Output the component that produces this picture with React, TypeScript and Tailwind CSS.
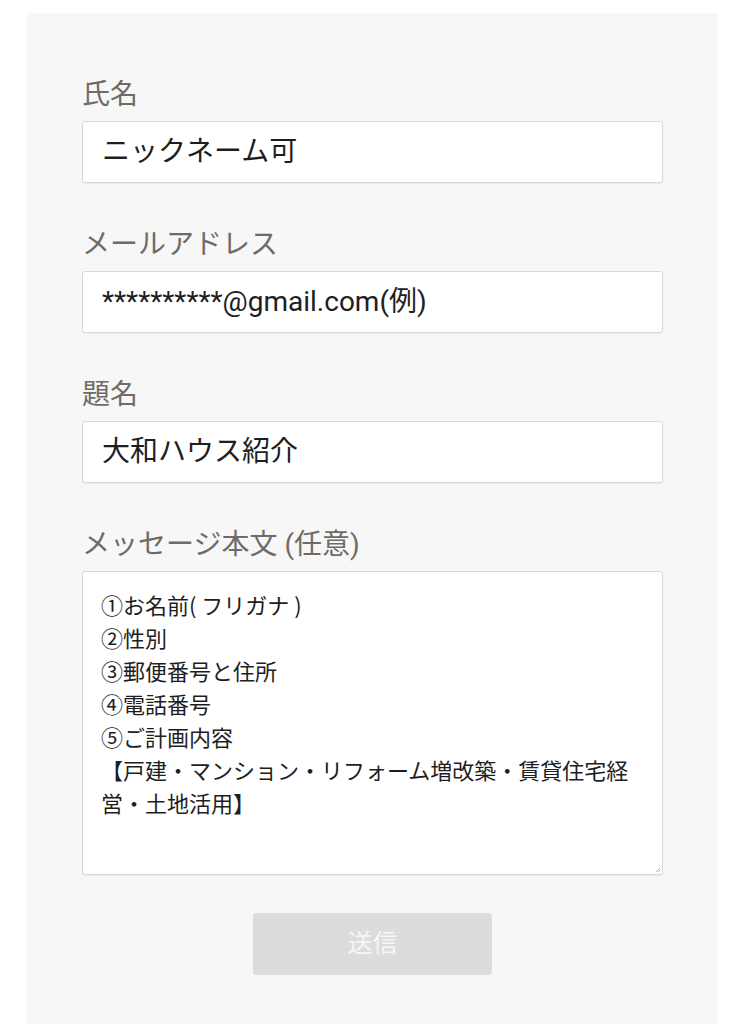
const fields = [
  { label: "氏名", value: "ニックネーム可" },
  { label: "メールアドレス", value: "**********@gmail.com(例)" },
  { label: "題名", value: "大和ハウス紹介" },
];

const messageLines = [
  "①お名前( フリガナ )",
  "②性別",
  "③郵便番号と住所",
  "④電話番号",
  "⑤ご計画内容",
  "【戸建・マンション・リフォーム増改築・賃貸住宅経",
  "営・土地活用】",
];

const App = () => {
  return (
    <div className="min-h-[1024px] bg-white pt-[13px] font-['Roboto','Noto_Sans_CJK_JP',sans-serif]">
      <div className="mx-[27px] w-[691px] min-h-[1011px] bg-[#f7f7f7] px-[55px] pt-[64px]">
        <form className="flex flex-col">
          {fields.map((field) => (
            <div key={field.label} className="mb-[44px] flex flex-col">
              <label className="h-[36px] text-[28px] leading-[36px] text-[#6f6b66]">{field.label}</label>
              <div className="mt-[8px] flex h-[62px] items-center rounded-[3px] border border-[#d8d8d8] bg-white px-[19px] text-[28px] text-[#1e1e1e] shadow-[0_1px_1px_rgba(0,0,0,0.05)]">
                {field.value}
              </div>
            </div>
          ))}

          <div className="flex flex-col">
            <label className="h-[36px] text-[28px] leading-[36px] text-[#6f6b66]">メッセージ本文 (任意)</label>
            <div className="relative mt-[8px] h-[304px] rounded-[3px] border border-[#d8d8d8] bg-white pl-[18px] pr-[20px] pt-[16px] font-['Noto_Sans_CJK_JP',sans-serif] text-[22px] text-[#1e1e1e] shadow-[0_1px_1px_rgba(0,0,0,0.05)]">
              {messageLines.map((line) => (
                <div key={line} className="h-[33px] whitespace-nowrap leading-[33px]">
                  {line}
                </div>
              ))}
              <svg className="absolute bottom-[1px] right-[1px]" width="6" height="6" viewBox="0 0 6 6">
                <path d="M5 1 L1 5 M5 3 L3 5" stroke="#b5b5b5" strokeWidth="1" />
              </svg>
            </div>
          </div>

          <div className="mt-[38px] flex justify-center">
            <button
              type="button"
              className="h-[62px] w-[239px] rounded-[3px] bg-[#dcdcdc] text-[25px] text-[#f6f6f6]"
            >
              送信
            </button>
          </div>
        </form>
      </div>
    </div>
  );
};

export default App;
